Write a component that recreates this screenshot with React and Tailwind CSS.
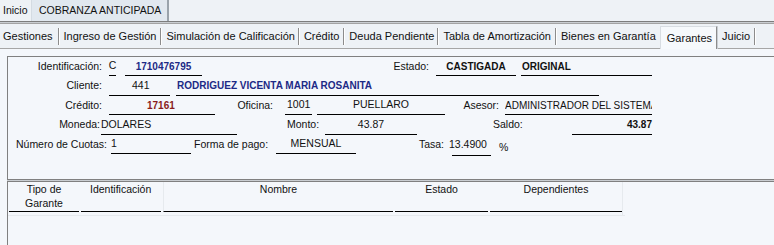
import React from 'react';

const tabs = [
  { label: 'Gestiones', pad: 'pl-[3px] pr-[5px]' },
  { label: 'Ingreso de Gestión', pad: 'pl-[5px] pr-[4px]' },
  { label: 'Simulación de Calificación', pad: 'pl-[5px] pr-[3px]' },
  { label: 'Crédito', pad: 'pl-[5px] pr-[4px]' },
  { label: 'Deuda Pendiente', pad: 'pl-[5px] pr-[3px]' },
  { label: 'Tabla de Amortización', pad: 'pl-[5px] pr-[4px]' },
  { label: 'Bienes en Garantía', pad: 'pl-[5px] pr-[4px]', beforeActive: true },
  { label: 'Garantes', pad: 'pl-[6px] pr-[4px]', active: true },
  { label: 'Juicio', pad: 'pl-[5px] pr-[4px]' },
];

const Label = ({ className = '', children }) => (
  <div className={`shrink-0 whitespace-nowrap ${className}`}>{children}</div>
);

const Field = ({ className = '', children }) => (
  <div className={`shrink-0 h-full flex items-center whitespace-nowrap border-b border-black ${className}`}>
    {children}
  </div>
);

const App = () => {
  return (
    <div className="w-[774px] h-[245px] overflow-hidden bg-[#f4f7fb] text-[#111] font-['Liberation_Sans',Arial,sans-serif]">
      {/* top bar */}
      <div className="h-[21px] flex bg-[#eef2f6] text-[10.5px]">
        <div className="pl-[3px] w-[31px] leading-[21px]">Inicio</div>
        <div className="w-[138px] leading-[21px] pl-[7px] whitespace-nowrap bg-[#e1e8ef] border-l border-[#d4dbe2] border-r-2 border-r-[#9aa3ab]">
          COBRANZA ANTICIPADA
        </div>
      </div>
      <div className="h-[3px] bg-[#c9cdd1] border-t border-b border-t-[#7d7d7d] border-b-[#a3a3a3]" />

      {/* tabs */}
      <div className="h-[25px] flex items-end border-b border-[#a6a6a6] bg-[#eef2f6] text-[11px]">
        {tabs.map((t) =>
          t.active ? (
            <div
              key={t.label}
              className={`shrink-0 whitespace-nowrap h-[23px] -mb-px pt-[3px] ${t.pad} bg-[#f6f9fc] border-t border-l border-r border-l-[#d8dde2] border-t-[#d8dde2] border-r-[#8c8c8c] shadow-[1px_0_0_#c8cdd2]`}
            >
              {t.label}
            </div>
          ) : (
            <div
              key={t.label}
              className={`shrink-0 whitespace-nowrap h-[17px] mb-[3px] flex items-center ${t.pad} ${
                t.beforeActive ? '' : 'border-r border-[#8c8c8c] shadow-[1px_0_0_#ffffff]'
              }`}
            >
              {t.label}
            </div>
          )
        )}
      </div>

      {/* datos del crédito */}
      <div className="ml-[7px] mt-[7px] h-[124px] border-t border-l border-b border-[#808080] text-[10.5px]">
        <div className="h-[19px] flex">
          <Label className="w-[96px] text-right pr-[2px] self-center">Identificación:</Label>
          <Field className="ml-[5px] w-[7px] justify-center">C</Field>
          <Field className="ml-[9px] w-[77px] justify-center font-bold text-[10px] text-[#1c2a86]">1710476795</Field>
          <Label className="w-[229px] text-right pr-[2px] self-center">Estado:</Label>
          <Field className="ml-[5px] w-[80px] justify-center font-bold text-[10px]">CASTIGADA</Field>
          <Field className="ml-[5px] w-[131px] pl-px font-bold text-[10px]">ORIGINAL</Field>
        </div>

        <div className="h-[20px] flex">
          <Label className="w-[96px] text-right pr-[2px] self-center">Cliente:</Label>
          <Field className="ml-[5px] w-[61px] pl-[23px]">441</Field>
          <Field className="ml-[6px] w-[423px] pl-px font-bold text-[10px] text-[#1c2a86]">
            RODRIGUEZ VICENTA MARIA ROSANITA
          </Field>
        </div>

        <div className="h-[19px] flex">
          <Label className="w-[96px] text-right pr-[2px] self-center">Crédito:</Label>
          <Field className="ml-[5px] w-[106px] pl-[38px] font-bold text-[10px] text-[#8a1c1c]">17161</Field>
          <Label className="w-[60px] text-right pr-[2px] self-center">Oficina:</Label>
          <Field className="ml-[10px] w-[27px] pl-[2px]">1001</Field>
          <Field className="ml-[5px] w-[128px] justify-center">PUELLARO</Field>
          <Label className="w-[56px] text-right pr-[2px] self-center">Asesor:</Label>
          <Field className="ml-[4px] w-[147px] overflow-hidden text-[10px]">ADMINISTRADOR DEL SISTEMA</Field>
        </div>

        <div className="h-[20px] flex">
          <Label className="w-[93px] text-right pr-[1px] self-center">Moneda:</Label>
          <Field className="w-[136px]">DOLARES</Field>
          <Label className="ml-[50px] w-[38px] self-center">Monto:</Label>
          <Field className="w-[92px] justify-center">43.87</Field>
          <Label className="ml-[76px] w-[79px] self-center">Saldo:</Label>
          <Field className="w-[80px] justify-end font-bold text-[10px]">43.87</Field>
        </div>

        <div className="h-[19px] flex items-start">
          <Label className="w-[103px] h-[19px] leading-[19px] text-right pr-[4px]">Número de Cuotas:</Label>
          <Field className="w-[80px]">1</Field>
          <Label className="ml-[3px] w-[82px] h-[19px] leading-[19px]">Forma de pago:</Label>
          <Field className="w-[80px] justify-center">MENSUAL</Field>
          <Label className="w-[90px] h-[19px] leading-[19px] text-right pr-[2px]">Tasa:</Label>
          <div className="ml-[6px] w-[39px] h-[21px] flex items-center border-b border-black">
            <span className="-ml-[3px]">13.4900</span>
          </div>
          <Label className="ml-[8px] pt-[5px]">%</Label>
        </div>
      </div>

      {/* garantes */}
      <div className="ml-[7px] mt-px h-[70px] border-t border-l border-[#808080] shadow-[0_-1px_0_#c9cdd1] text-[10.5px]">
        <div className="h-[34px] w-[617px] flex items-start border-b border-[#e6eaee]">
          <div className="ml-px w-[70px] h-[30px] border-b border-black text-center leading-[14px]">
            Tipo de
            <br />
            Garante
          </div>
          <div className="ml-[2px] w-[80px] h-[30px] border-b border-black pl-[9px] leading-[14px]">Identificación</div>
          <div className="ml-[2px] w-[230px] h-[30px] border-b border-black text-center leading-[14px] border-l border-l-[#e6eaee]">
            Nombre
          </div>
          <div className="ml-[2px] w-[93px] h-[30px] border-b border-black text-center leading-[14px]">Estado</div>
          <div className="ml-[2px] w-[133px] h-[34px] border-r border-[#e6eaee]">
            <div className="h-[30px] border-b border-black text-center leading-[14px]">Dependientes</div>
          </div>
        </div>
      </div>
    </div>
  );
};

export default App;
